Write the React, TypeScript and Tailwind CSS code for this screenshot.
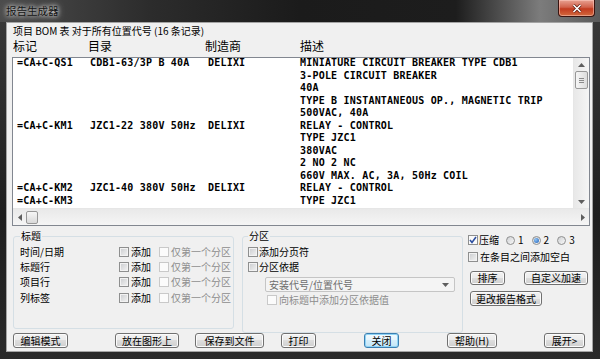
import React from "react";

const cjk = "[font-family:'Noto_Sans_CJK_SC','Microsoft_YaHei',sans-serif]";
const mono = "[font-family:'DejaVu_Sans_Mono','Liberation_Mono',monospace]";

type Entry = { tags: string[]; cat: string; mfr: string; desc: string[] };

// only the rows visible in the scrolled list
const entries: Entry[] = [
  {
    tags: ["=CA+C-QS1"],
    cat: "CDB1-63/3P B 40A",
    mfr: "DELIXI",
    desc: [
      "MINIATURE CIRCUIT BREAKER TYPE CDB1",
      "3-POLE CIRCUIT BREAKER",
      "40A",
      "TYPE B INSTANTANEOUS OP., MAGNETIC TRIP",
      "500VAC, 40A",
    ],
  },
  {
    tags: ["=CA+C-KM1"],
    cat: "JZC1-22 380V 50Hz",
    mfr: "DELIXI",
    desc: ["RELAY - CONTROL", "TYPE JZC1", "380VAC", "2 NO 2 NC", "660V MAX. AC, 3A, 50Hz COIL"],
  },
  {
    tags: ["=CA+C-KM2", "=CA+C-KM3"],
    cat: "JZC1-40 380V 50Hz",
    mfr: "DELIXI",
    desc: ["RELAY - CONTROL", "TYPE JZC1"],
  },
];

function Check({ checked = false, disabled = false }: { checked?: boolean; disabled?: boolean }) {
  return (
    <span
      className={
        "w-[10px] h-[10px] shrink-0 border flex items-center justify-center " +
        (disabled
          ? "border-[#c9c9c9] bg-[#fbfbfb]"
          : checked
          ? "border-[#8e8f8f] bg-[#fafafa]"
          : "border-[#8e8f8f] bg-[linear-gradient(135deg,#c9cbce,#f4f4f4)] shadow-[inset_0_0_0_1px_#f2f2f2]")
      }
    >
      {checked && (
        <svg width="8" height="8" viewBox="0 0 8 8">
          <path d="M1 4 L3 6.5 L7 1" fill="none" stroke="#2d4fa0" strokeWidth="1.6" />
        </svg>
      )}
    </span>
  );
}

function Radio({ checked = false }: { checked?: boolean }) {
  return (
    <span className="w-[9px] h-[9px] shrink-0 rounded-full border border-[#8e8f8f] bg-[linear-gradient(135deg,#cfd1d4,#f8f8f8)] flex items-center justify-center">
      {checked && <span className="w-[5px] h-[5px] rounded-full bg-[radial-gradient(circle_at_35%_35%,#8fc4f5,#1f5fb8)]" />}
    </span>
  );
}

function Btn({ children, w, focus = false, h = "h-[15px]" }: { children: React.ReactNode; w: string; focus?: boolean; h?: string }) {
  return (
    <div
      className={
        `${w} ${h} shrink-0 rounded-[3px] border flex items-center justify-center text-[10px] leading-[12px] ` +
        (focus
          ? "border-[#3c7fb1] bg-[linear-gradient(to_bottom,#f4fbfe_0%,#e5f4fc_50%,#d4eefb_50%,#c4e5f6_100%)] shadow-[inset_0_0_0_1px_#8fd3f5]"
          : "border-[#707070] bg-[linear-gradient(to_bottom,#f2f2f2_0%,#ebebeb_50%,#dddddd_50%,#cfcfcf_100%)] shadow-[inset_0_0_0_1px_#fbfbfb]")
      }
    >
      {children}
    </div>
  );
}

function Tri({ dir }: { dir: "up" | "down" | "left" | "right" }) {
  const pts = { up: "0,4 3.5,0 7,4", down: "0,0 3.5,4 7,0", left: "4,0 0,3.5 4,7", right: "0,0 4,3.5 0,7" }[dir];
  const horiz = dir === "left" || dir === "right";
  return (
    <svg width={horiz ? 4 : 7} height={horiz ? 7 : 4} viewBox={horiz ? "0 0 4 7" : "0 0 7 4"}>
      <polygon points={pts} fill="#5e5e5e" />
    </svg>
  );
}

export default function App() {
  const lines: { tag: string; cat: string; mfr: string; desc: string }[] = [];
  entries.forEach((e) => {
    const n = Math.max(e.tags.length, e.desc.length);
    for (let i = 0; i < n; i++) {
      lines.push({ tag: e.tags[i] ?? "", cat: i === 0 ? e.cat : "", mfr: i === 0 ? e.mfr : "", desc: e.desc[i] ?? "" });
    }
  });

  const opts = ["时间/日期", "标题行", "项目行", "列标签"];

  return (
    <div className={`w-[600px] h-[359px] overflow-hidden whitespace-nowrap flex flex-col bg-[linear-gradient(to_bottom,#3a3a3a,#1e1e1e_60%,#2a2a2a)] text-black ${cjk}`}>
      {/* title bar */}
      <div className="h-[22px] shrink-0 flex items-start justify-between pl-[6px] bg-[linear-gradient(to_right,#4c4c4c_0%,#2c2c2c_25%,#1b1b1b_50%,#1d1d1d_76%,#7c7c7c_90%,#5a5a5a_100%)]">
        <span className="mt-[4px] text-[10.5px] leading-[14px] text-[#151515] [text-shadow:0_0_4px_#e8e8e8,0_0_7px_#d0d0d0]">
          报告生成器
        </span>
        <div className="mr-[5px] w-[37px] h-[17px] rounded-b-[4px] border border-t-0 border-[#3a1410] bg-[linear-gradient(to_bottom,#e8a192_0%,#d1624c_45%,#c23a1f_55%,#d26a3e_100%)] shadow-[inset_0_0_0_1px_rgba(255,210,200,0.5)] flex items-center justify-center">
          <svg width="10" height="9" viewBox="0 0 10 9">
            <path d="M1.5 1 L8.5 8 M8.5 1 L1.5 8" stroke="#5a1a10" strokeWidth="3" />
            <path d="M1.5 1 L8.5 8 M8.5 1 L1.5 8" stroke="#fff" strokeWidth="1.6" />
          </svg>
        </div>
      </div>

      {/* client area */}
      <div className="ml-[6px] mr-[7px] h-[330px] border border-[#a4a4a4] bg-[#f0f0f0] flex flex-col">
        <div className="pt-[1px] pl-[6px] text-[10px] leading-[14px]">项目 BOM 表 对于所有位置代号 (16 条记录)</div>
        <div className="flex pl-[6px] text-[12px] leading-[16px]">
          <span className="w-[75px]">标记</span>
          <span className="w-[117px]">目录</span>
          <span className="w-[95px]">制造商</span>
          <span>描述</span>
        </div>

        {/* list */}
        <div className="ml-[5px] mt-[3px] w-[578px] h-[169px] border border-[#828790] bg-white flex flex-col">
          <div className="h-[150px] flex">
            <div className={`flex-1 overflow-hidden pl-[4px] ${mono} text-[10px] font-bold tracking-[0.2px]`}>
              <div className="-mt-[1px]">
                {lines.map((l, i) => (
                  <div key={i} className="flex h-[12.5px] leading-[12.5px] whitespace-pre">
                    <span className="w-[73px]">{l.tag}</span>
                    <span className="w-[118px]">{l.cat}</span>
                    <span className="w-[92px]">{l.mfr}</span>
                    <span>{l.desc}</span>
                  </div>
                ))}
              </div>
            </div>
            <div className="w-[16px] border-l border-[#e6e6e6] bg-[linear-gradient(to_right,#e8e8e8,#f5f5f5)] flex flex-col items-center">
              <div className="h-[13px] flex items-center justify-center">
                <Tri dir="up" />
              </div>
              <div className="w-[13px] h-[18px] rounded-[2px] border border-[#979797] bg-[linear-gradient(to_right,#f6f6f6,#dcdcdc)] flex flex-col items-center justify-center gap-[1px]">
                <span className="w-[5px] h-px bg-[#8a8a8a]" />
                <span className="w-[5px] h-px bg-[#8a8a8a]" />
                <span className="w-[5px] h-px bg-[#8a8a8a]" />
              </div>
              <div className="flex-1" />
              <div className="h-[13px] flex items-center justify-center">
                <Tri dir="down" />
              </div>
            </div>
          </div>
          <div className="h-[17px] border-t border-[#e6e6e6] bg-[linear-gradient(to_bottom,#e9e9e9,#f5f5f5)] flex items-center">
            <div className="w-[13px] flex justify-center">
              <Tri dir="left" />
            </div>
            <div className="w-[12px] h-[13px] rounded-[2px] border border-[#979797] bg-[linear-gradient(to_bottom,#f6f6f6,#d9d9d9)]" />
            <div className="flex-1" />
            <div className="w-[13px] flex justify-center">
              <Tri dir="right" />
            </div>
          </div>
        </div>

        {/* options */}
        <div className="flex pl-[6px] mt-[4px] text-[10px] leading-[12px]">
          <fieldset className="w-[221px] h-[99px] shrink-0 border border-[#d5dfe5] rounded-[3px] pl-[6px]">
            <legend className="px-[1px] leading-[12px]">标题</legend>
            <div className="pt-[2px]">
              {opts.map((o) => (
                <div key={o} className="flex items-center h-[15.3px]">
                  <span className="w-[99px] shrink-0">{o}</span>
                  <Check />
                  <span className="ml-[2px] shrink-0">添加</span>
                  <span className="ml-[8px] shrink-0">
                    <Check disabled />
                  </span>
                  <span className="ml-[2px] shrink-0 text-[#8d8d8d]">仅第一个分区</span>
                </div>
              ))}
            </div>
          </fieldset>

          <fieldset className="ml-[8px] w-[221px] h-[103px] shrink-0 border border-[#d5dfe5] rounded-[3px] pl-[5px] pr-[6px]">
            <legend className="px-[1px] leading-[12px]">分区</legend>
            <div className="pt-[2px]">
              <div className="flex items-center h-[15px]">
                <Check />
                <span className="ml-[1px]">添加分页符</span>
              </div>
              <div className="flex items-center h-[15px]">
                <Check />
                <span className="ml-[1px]">分区依据</span>
              </div>
              <div className="ml-[17px] mt-[3px] w-[190px] h-[15px] rounded-[2px] border border-[#c5c5c5] bg-[#f4f4f4] flex items-center justify-between pl-[3px] pr-[5px] text-[#6d6d6d]">
                <span>安装代号/位置代号</span>
                <Tri dir="down" />
              </div>
              <div className="ml-[19px] flex items-center h-[15px] text-[#8d8d8d]">
                <Check disabled />
                <span className="ml-[2px]">向标题中添加分区依据值</span>
              </div>
            </div>
          </fieldset>

          <div className="ml-[5px] flex flex-col pt-[3px]">
            <div className="flex items-center h-[14px]">
              <Check checked />
              <span className="ml-[1px]">压缩</span>
              <span className="ml-[7px]">
                <Radio />
              </span>
              <span className="ml-[3px]">1</span>
              <span className="ml-[8px]">
                <Radio checked />
              </span>
              <span className="ml-[3px]">2</span>
              <span className="ml-[8px]">
                <Radio />
              </span>
              <span className="ml-[3px]">3</span>
            </div>
            <div className="flex items-center h-[14px] mt-[3px]">
              <Check />
              <span className="ml-[2px]">在条目之间添加空白</span>
            </div>
            <div className="flex mt-[7px] ml-[2px]">
              <Btn w="w-[35px]" h="h-[14px]">排序</Btn>
              <span className="ml-[19px]">
                <Btn w="w-[64px]" h="h-[14px]">自定义加速</Btn>
              </span>
            </div>
            <div className="flex mt-[6px] ml-[2px]">
              <Btn w="w-[72px]">更改报告格式</Btn>
            </div>
          </div>
        </div>

        {/* bottom buttons */}
        <div className="mt-auto mb-[4px] flex pl-[6px]">
          <Btn w="w-[55px]">编辑模式</Btn>
          <span className="ml-[47px]">
            <Btn w="w-[64px]">放在图形上</Btn>
          </span>
          <span className="ml-[16px]">
            <Btn w="w-[69px]">保存到文件</Btn>
          </span>
          <span className="ml-[17px]">
            <Btn w="w-[35px]">打印</Btn>
          </span>
          <span className="ml-[48px]">
            <Btn w="w-[35px]" focus>
              关闭
            </Btn>
          </span>
          <span className="ml-[48px]">
            <Btn w="w-[50px]">帮助(H)</Btn>
          </span>
          <span className="ml-[47px]">
            <Btn w="w-[41px]">展开&gt;</Btn>
          </span>
        </div>
      </div>
    </div>
  );
}
